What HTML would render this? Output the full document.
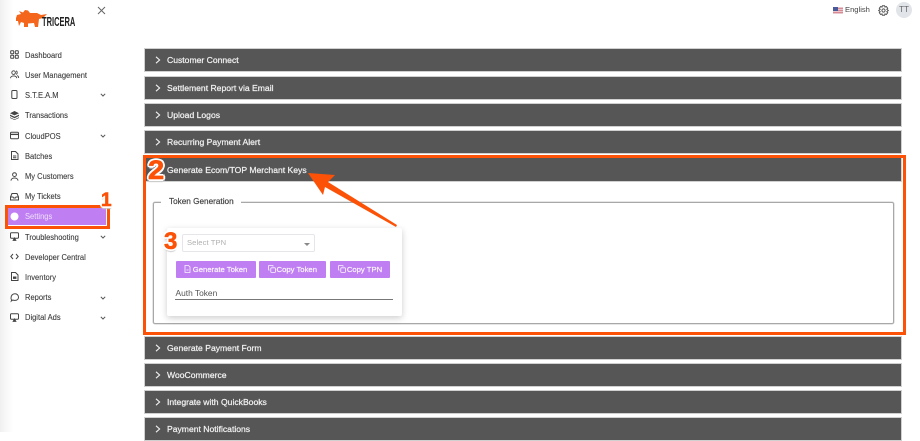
<!DOCTYPE html>
<html><head><meta charset="utf-8">
<style>
html,body{margin:0;padding:0;width:920px;height:432px;overflow:hidden;background:#fff;font-family:"Liberation Sans",sans-serif}
.a{position:absolute}
#side{left:0;top:0;width:120px;height:432px;background:linear-gradient(90deg,#efefef 0,#f8f8f8 6px,#fff 14px)}
.m{position:absolute;left:25px;font-size:8.4px;line-height:12px;color:#3a3a3a;white-space:nowrap;transform:scaleX(.9);transform-origin:0 0;-webkit-text-stroke:.1px #3a3a3a}
.i{position:absolute;left:10px;width:9px;height:9px;overflow:visible}
.c{position:absolute;left:100px;width:6px;height:4px}
.bar{position:absolute;left:144px;width:758px;background:#565656;color:#f2f2f2;font-size:8.6px;box-shadow:0 0 0 1px #d0d0d0 inset;box-sizing:border-box;-webkit-text-stroke:.22px #f2f2f2}
.bar span{position:absolute;left:23px;top:50%;margin-top:-6px;line-height:12px;white-space:nowrap}
.bar svg{position:absolute;left:11px;top:50%;margin-top:-4px;width:6px;height:8px}
.btn{position:absolute;top:261px;height:17px;background:#bf7ff2;border-radius:1px;color:#fbf6ff;font-size:7.7px;line-height:17px;text-align:center;white-space:nowrap;-webkit-text-stroke:.2px #fbf6ff}
.num{position:absolute;font-weight:bold;color:#fb5208;-webkit-text-stroke:.6px #fb5208;text-shadow:-2px 0 0 #fff,2px 0 0 #fff,0 -2px 0 #fff,0 2px 0 #fff,-1.5px -1.5px 0 #fff,1.5px -1.5px 0 #fff,-1.5px 1.5px 0 #fff,1.5px 1.5px 0 #fff,0 3px 1px #ccc;line-height:1}
</style></head>
<body>
<div class="a" id="side"></div>

<svg class="a" style="left:15px;top:9px;width:32px;height:19px" viewBox="0 0 32 19"><path d="M1 9 L2 6 L6 5 L4 2 L8 3.5 L10 1 L13 1.5 L15 4 L22 4 L26 6 L32 5 L28 9 L24 10 L23 18 L20 18 L19 14 L13 14.5 L13 18 L9 18 L9 14 L6 13 L4 17 L3 12 L1 12Z" fill="#f4661b"/></svg>
<div class="a" style="left:42px;top:16px;font-size:12.5px;font-weight:bold;color:#222;line-height:13px;transform:scaleX(.6);transform-origin:0 0">TRICERA</div>
<svg class="a" style="left:97px;top:6px;width:9px;height:9px" viewBox="0 0 9 9"><path d="M1 1L8 8M8 1L1 8" stroke="#666" stroke-width="1" fill="none"/></svg>

<svg class="i" style="top:50px" viewBox="0 0 9 9" fill="none" stroke="#444" stroke-width="1"><rect x=".7" y=".7" width="3" height="3" rx=".6"/><rect x="5.3" y=".7" width="3" height="3" rx=".6"/><rect x=".7" y="5.3" width="3" height="3" rx=".6"/><rect x="5.3" y="5.3" width="3" height="3" rx=".6"/></svg>
<div class="m" style="top:49px">Dashboard</div>
<svg class="i" style="top:70px" viewBox="0 0 9 9" fill="none" stroke="#444" stroke-width=".9"><circle cx="3.6" cy="2.6" r="1.8"/><path d="M.5 8.2C.7 5.2 6.5 5.2 6.8 8.2M6 .9C7.6 1.2 7.6 4 6 4.3M7.2 5.5C8.2 6 8.7 7 8.7 8"/></svg>
<div class="m" style="top:69px">User Management</div>
<svg class="i" style="top:90px" viewBox="0 0 9 9" fill="none" stroke="#444" stroke-width="1"><rect x="1.8" y=".5" width="5.2" height="8" rx="1"/></svg>
<div class="m" style="top:89px">S.T.E.A.M</div>
<svg class="c" style="top:93px" viewBox="0 0 6 4" fill="none" stroke="#555" stroke-width="1"><path d="M.8.8L3 3L5.2.8"/></svg>
<svg class="i" style="top:111px" viewBox="0 0 9 9" fill="#444"><path d="M4.5 0L9 2.2L4.5 4.4L0 2.2Z"/><path d="M0 3.6L4.5 5.8L9 3.6V5L4.5 7.2L0 5Z"/><path d="M0 6.2L4.5 8.4L9 6.2V7L4.5 9L0 7Z"/></svg>
<div class="m" style="top:109px">Transactions</div>
<svg class="i" style="top:131px" viewBox="0 0 9 9" fill="none" stroke="#444" stroke-width="1"><rect x=".5" y="1.3" width="8" height="6.4" rx="1"/><path d="M.5 3.4H8.5" stroke-width="1.3"/></svg>
<div class="m" style="top:130px">CloudPOS</div>
<svg class="c" style="top:134px" viewBox="0 0 6 4" fill="none" stroke="#555" stroke-width="1"><path d="M.8.8L3 3L5.2.8"/></svg>
<svg class="i" style="top:151px" viewBox="0 0 9 9" fill="none" stroke="#444" stroke-width="1"><path d="M1.5.5H5.5L8 3V8.5H1.5ZM3 5H6.3M3 6.8H6.3"/></svg>
<div class="m" style="top:150px">Batches</div>
<svg class="i" style="top:172px" viewBox="0 0 9 9" fill="none" stroke="#444" stroke-width="1"><circle cx="4.5" cy="2.6" r="1.9"/><path d="M1 8.6C1.2 5.2 7.8 5.2 8 8.6"/></svg>
<div class="m" style="top:170px">My Customers</div>
<svg class="i" style="top:192px" viewBox="0 0 9 9" fill="none" stroke="#444" stroke-width="1"><path d="M.5 5L2 1.5H7L8.5 5V8H.5ZM.5 5H3L3.6 6H5.4L6 5H8.5"/></svg>
<div class="m" style="top:190px">My Tickets</div>

<div class="a" style="left:5px;top:205px;width:105px;height:24px;border:3px solid #fb5208;box-sizing:border-box;background:#fff"></div>
<div class="a" style="left:8px;top:208px;width:98px;height:17px;background:#bf7ff2"></div>
<svg class="i" style="top:212px" viewBox="0 0 9 9"><circle cx="4.5" cy="4.5" r="4" fill="#fff"/></svg>
<div class="m" style="top:210px;color:#f0e0ff;-webkit-text-stroke:0">Settings</div>
<div class="num" style="left:101px;top:191px;font-size:19px">1</div>

<svg class="i" style="top:232px" viewBox="0 0 9 9" fill="none" stroke="#444" stroke-width="1"><rect x=".5" y=".7" width="8" height="5.6" rx="1"/><path d="M3.2 8.4H5.8L4.5 6Z" fill="#444"/></svg>
<div class="m" style="top:231px">Troubleshooting</div>
<svg class="c" style="top:235px" viewBox="0 0 6 4" fill="none" stroke="#555" stroke-width="1"><path d="M.8.8L3 3L5.2.8"/></svg>
<svg class="i" style="top:252px" viewBox="0 0 9 9" fill="none" stroke="#444" stroke-width="1"><path d="M3 2L.8 4.5L3 7M6 2L8.2 4.5L6 7"/></svg>
<div class="m" style="top:251px">Developer Central</div>
<svg class="i" style="top:272px" viewBox="0 0 9 9" fill="none" stroke="#444" stroke-width="1"><path d="M1.5.5H5.5L8 3V8.5H1.5Z"/><rect x="3" y="4.5" width="3.4" height="2.4" fill="#444" stroke="none"/></svg>
<div class="m" style="top:271px">Inventory</div>
<svg class="i" style="top:293px" viewBox="0 0 9 9" fill="none" stroke="#444" stroke-width="1"><path d="M1.4 8C1.8 7 1.2 6.4 1 5.2C.8 2.6 2.6.8 5 .8C7 .8 8.5 2.2 8.5 4.2C8.5 6.2 6.8 7.4 4.8 7.4C3.8 7.4 3 7 2.8 7Z"/></svg>
<div class="m" style="top:291px">Reports</div>
<svg class="c" style="top:296px" viewBox="0 0 6 4" fill="none" stroke="#555" stroke-width="1"><path d="M.8.8L3 3L5.2.8"/></svg>
<svg class="i" style="top:313px" viewBox="0 0 9 9" fill="none" stroke="#444" stroke-width="1"><rect x=".5" y=".7" width="8" height="5.6" rx="1"/><path d="M3.2 8.4H5.8L4.5 6Z" fill="#444"/></svg>
<div class="m" style="top:311px">Digital Ads</div>
<svg class="c" style="top:316px" viewBox="0 0 6 4" fill="none" stroke="#555" stroke-width="1"><path d="M.8.8L3 3L5.2.8"/></svg>

<!-- top right -->
<svg class="a" style="left:833px;top:7px;width:10px;height:7px" viewBox="0 0 10 7"><rect width="10" height="7" fill="#e8c8cc"/><rect y="1" width="10" height="1" fill="#d98a94"/><rect y="3" width="10" height="1" fill="#d98a94"/><rect y="5" width="10" height="1" fill="#d98a94"/><rect width="5" height="4" fill="#4a5a98"/></svg>
<div class="a" style="left:845px;top:4px;font-size:7.6px;line-height:12px;color:#444">English</div>
<svg class="a" style="left:878px;top:5px;width:11px;height:11px" viewBox="0 0 11 11" fill="none" stroke="#555" stroke-width="1"><path d="M4.4 .7H6.6L7 2.1L8.3 1.5L9.7 3.2L8.8 4.3L10.3 5.5L8.8 6.7L9.7 7.8L8.3 9.5L7 8.9L6.6 10.3H4.4L4 8.9L2.7 9.5L1.3 7.8L2.2 6.7L.7 5.5L2.2 4.3L1.3 3.2L2.7 1.5L4 2.1Z"/><circle cx="5.5" cy="5.5" r="1.6"/></svg>
<div class="a" style="left:896px;top:2px;width:16px;height:16px;border-radius:50%;background:#e1e4e8;color:#666;font-size:8px;line-height:16px;text-align:center">TT</div>

<!-- bars -->
<div class="bar" style="top:48px;height:24px"><svg viewBox="0 0 6 8" fill="none" stroke="#f2f2f2" stroke-width="1.1"><path d="M1 .8L4.6 4L1 7.2"/></svg><span>Customer Connect</span></div>
<div class="bar" style="top:75.5px;height:24px"><svg viewBox="0 0 6 8" fill="none" stroke="#f2f2f2" stroke-width="1.1"><path d="M1 .8L4.6 4L1 7.2"/></svg><span>Settlement Report via Email</span></div>
<div class="bar" style="top:103px;height:24px"><svg viewBox="0 0 6 8" fill="none" stroke="#f2f2f2" stroke-width="1.1"><path d="M1 .8L4.6 4L1 7.2"/></svg><span>Upload Logos</span></div>
<div class="bar" style="top:130px;height:24px"><svg viewBox="0 0 6 8" fill="none" stroke="#f2f2f2" stroke-width="1.1"><path d="M1 .8L4.6 4L1 7.2"/></svg><span>Recurring Payment Alert</span></div>
<div class="bar" style="top:157px;height:25px"><span>Generate Ecom/TOP Merchant Keys</span></div>

<!-- fieldset -->
<div class="a" style="left:153px;top:202px;width:741px;height:122px;border:1px solid #a8a8a8;border-radius:2px;box-sizing:border-box;box-shadow:0 0 0 .5px #ccc"></div>
<div class="a" style="left:161px;top:196px;width:80px;height:12px;background:#fff;font-size:8.2px;color:#444;line-height:12px;text-indent:8px;white-space:nowrap;-webkit-text-stroke:.2px #444">Token Generation</div>

<!-- card -->
<div class="a" style="left:167px;top:228px;width:235px;height:88px;background:#fff;border-radius:2px;box-shadow:0 2px 7px rgba(0,0,0,.2)"></div>
<div class="a" style="left:182px;top:234px;width:133px;height:18px;border:1px solid #e4e6ea;border-radius:2px;box-sizing:border-box;font-size:7.6px;color:#b0b0b0;line-height:16px;text-indent:4px;letter-spacing:.1px">Select TPN</div>
<div class="a" style="left:304px;top:242.5px;width:0;height:0;border-left:3px solid transparent;border-right:3px solid transparent;border-top:3.5px solid #888"></div>

<div class="btn" style="left:175.5px;width:80px"><svg style="width:7px;height:8px;vertical-align:-1px;margin-right:2px" viewBox="0 0 7 8" fill="none" stroke="#fbf6ff" stroke-width=".8"><path d="M1 .5H4.5L6 2V7.5H1ZM2.4 5H4.6"/></svg>Generate Token</div>
<div class="btn" style="left:259px;width:66.5px"><svg style="width:8px;height:8px;vertical-align:-1px;margin-right:1px" viewBox="0 0 8 8" fill="none" stroke="#fbf6ff" stroke-width=".8"><rect x="2.8" y="2.8" width="4.6" height="4.6" rx=".7"/><path d="M5 1.6V.6H.6V5H1.6"/></svg>Copy Token</div>
<div class="btn" style="left:330px;width:60px"><svg style="width:8px;height:8px;vertical-align:-1px;margin-right:1px" viewBox="0 0 8 8" fill="none" stroke="#fbf6ff" stroke-width=".8"><rect x="2.8" y="2.8" width="4.6" height="4.6" rx=".7"/><path d="M5 1.6V.6H.6V5H1.6"/></svg>Copy TPN</div>

<div class="a" style="left:175.5px;top:287px;font-size:8.4px;line-height:12px;color:#555">Auth Token</div>
<div class="a" style="left:175px;top:298.5px;width:218px;height:1px;background:#777"></div>

<!-- lower bars -->
<div class="bar" style="top:335.5px;height:24px"><svg viewBox="0 0 6 8" fill="none" stroke="#f2f2f2" stroke-width="1.1"><path d="M1 .8L4.6 4L1 7.2"/></svg><span>Generate Payment Form</span></div>
<div class="bar" style="top:363px;height:24px"><svg viewBox="0 0 6 8" fill="none" stroke="#f2f2f2" stroke-width="1.1"><path d="M1 .8L4.6 4L1 7.2"/></svg><span>WooCommerce</span></div>
<div class="bar" style="top:390px;height:24px"><svg viewBox="0 0 6 8" fill="none" stroke="#f2f2f2" stroke-width="1.1"><path d="M1 .8L4.6 4L1 7.2"/></svg><span>Integrate with QuickBooks</span></div>
<div class="bar" style="top:417px;height:24px"><svg viewBox="0 0 6 8" fill="none" stroke="#f2f2f2" stroke-width="1.1"><path d="M1 .8L4.6 4L1 7.2"/></svg><span>Payment Notifications</span></div>

<!-- annotations -->
<div class="a" style="left:143px;top:155px;width:763px;height:180px;border:3px solid #fb5208;box-sizing:border-box"></div>
<div class="num" style="left:148px;top:157px;font-size:27px;transform:scaleX(1.08);transform-origin:0 0">2</div>
<div class="num" style="left:164px;top:230px;font-size:24px">3</div>
<svg class="a" style="left:300px;top:165px;width:100px;height:65px" viewBox="0 0 100 65"><path d="M8 8L35 10L28 17L97 60L96 62L25 22L23 30Z" fill="#fb5208"/></svg>
</body></html>
